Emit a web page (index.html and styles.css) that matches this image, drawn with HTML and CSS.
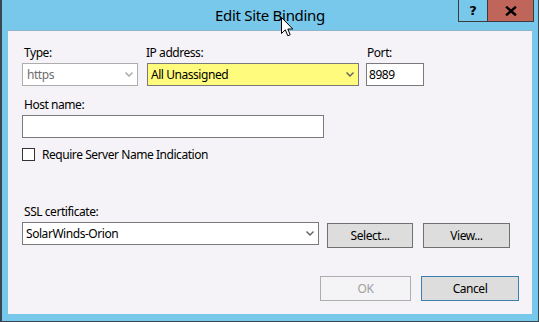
FILE: index.html
```html
<!DOCTYPE html>
<html>
<head>
<meta charset="utf-8">
<link rel="stylesheet" href="styles.css">
</head>
<body>
<div class="window">
  <div class="titlebar">
    <div class="tb-side"></div>
    <div class="title">Edit Site Binding</div>
    <div class="tb-side tb-buttons">
      <div class="cap-btn help">?</div>
      <div class="cap-btn close">
        <svg width="12" height="10" viewBox="0 0 12 10"><path d="M2 1.5 L10 8.5 M10 1.5 L2 8.5" stroke="#000" stroke-width="2.4" stroke-linecap="square"/></svg>
      </div>
    </div>
  </div>
  <div class="client">
    <div class="row row1">
      <div class="field f-type">
        <div class="label lbl-type">Type:</div>
        <div class="combo disabled">
          <span class="val">https</span>
          <svg class="chev" width="8" height="5" viewBox="0 0 8 5"><path d="M0.5 0.5 L4 4 L7.5 0.5" fill="none" stroke="#a6a6a6" stroke-width="1.4"/></svg>
        </div>
      </div>
      <div class="field f-ip">
        <div class="label lbl-ip">IP address:</div>
        <div class="combo yellow">
          <span class="val">All Unassigned</span>
          <svg class="chev" width="8" height="5" viewBox="0 0 8 5"><path d="M0.5 0.5 L4 4 L7.5 0.5" fill="none" stroke="#606060" stroke-width="1.4"/></svg>
        </div>
      </div>
      <div class="field f-port">
        <div class="label lbl-port">Port:</div>
        <div class="textbox port"><span class="val">8989</span></div>
      </div>
    </div>
    <div class="field f-host">
      <div class="label lbl-type">Host name:</div>
      <div class="textbox host"></div>
    </div>
    <div class="check-row">
      <div class="checkbox"></div>
      <span class="check-label">Require Server Name Indication</span>
    </div>
    <div class="field f-ssl">
      <div class="label lbl-type">SSL certificate:</div>
      <div class="ssl-row">
        <div class="combo ssl">
          <span class="val">SolarWinds-Orion</span>
          <svg class="chev" width="8" height="5" viewBox="0 0 8 5"><path d="M0.5 0.5 L4 4 L7.5 0.5" fill="none" stroke="#606060" stroke-width="1.4"/></svg>
        </div>
        <div class="btn btn-select">Select...</div>
        <div class="btn btn-view">View...</div>
      </div>
    </div>
    <div class="footer">
      <div class="btn btn-ok">OK</div>
      <div class="btn btn-cancel">Cancel</div>
    </div>
  </div>
  <svg class="cursor" width="13" height="21" viewBox="0 0 13 21"><path d="M0.5 0.5 L0.5 16.5 L4.3 12.8 L6.8 18.8 L9.2 17.8 L6.8 12 L11.8 12 Z" fill="#fff" stroke="#000" stroke-width="1" stroke-linejoin="miter"/></svg>
</div>
</body>
</html>
```
FILE: styles.css
```css
* { box-sizing: border-box; }
html, body { margin: 0; padding: 0; background: #ffffff; }
body {
  font-family: "Noto Sans", "Open Sans", sans-serif;
  font-size: 12px;
  letter-spacing: -0.45px;
  color: #000;
}
.window {
  position: relative;
  width: 539px;
  height: 322px;
  background: #78c8ec;
  border-left: 2px solid #3a4650;
  border-right: 1px solid #3a4650;
  border-bottom: 1px solid #3a4650;
  display: flex;
  flex-direction: column;
  overflow: hidden;
}
.titlebar {
  height: 30px;
  display: grid;
  grid-template-columns: 1fr auto 1fr;
}
.title {
  font-size: 15px;
  line-height: 30px;
  letter-spacing: -0.3px;
  color: #000;
  white-space: nowrap;
}
.tb-buttons {
  display: flex;
  justify-content: flex-end;
  align-items: flex-start;
  padding-right: 4px;
}
.cap-btn {
  height: 22px;
  border: 1px solid #3b3b3b;
  border-top: none;
  display: flex;
  align-items: center;
  justify-content: center;
  letter-spacing: 0;
}
.help {
  width: 29px;
  background: #78c8ec;
  font-weight: bold;
  font-size: 13px;
  font-family: "DejaVu Sans", sans-serif;
  border-right: none;
}
.close {
  width: 47px;
  background: #bf655a;
}
.client {
  margin: 0 6px 7px 6px;
  flex: 1;
  background: #f5f3f7;
  border-top: 1px solid #8fb4cc;
  display: flex;
  flex-direction: column;
  padding: 14px 0 0 14px;
}
.row { display: flex; }
.field { display: flex; flex-direction: column; }
.label {
  height: 15px;
  line-height: 15px;
  margin-bottom: 3px;
  white-space: nowrap;
}
.lbl-type { padding-left: 2px; }
.lbl-ip { margin-left: -1px; }
.lbl-port { padding-left: 1px; }
.combo, .textbox {
  height: 23px;
  border: 1px solid #7a7a7a;
  background: #fff;
  display: flex;
  align-items: center;
  line-height: 21px;
}
.combo .val, .textbox .val { flex: 1; padding-left: 4px; white-space: nowrap; }
.chev { margin-right: 4px; flex: none; }
.f-type { width: 116px; }
.combo.disabled { border-color: #adadad; color: #6d6d6d; }
.f-ip { width: 212px; margin-left: 9px; }
.combo.yellow { background: #fffb7c; border-color: #7a7a7a; }
.combo.yellow .val { padding-left: 3px; }
.f-port { width: 58px; margin-left: 7px; }
.textbox.port .val { padding-left: 2px; }
.f-host { margin-top: 11px; }
.textbox.host { width: 302px; }
.check-row {
  display: flex;
  align-items: center;
  margin-top: 10px;
  height: 13px;
}
.checkbox {
  width: 13px;
  height: 13px;
  border: 1px solid #333;
  background: #fff;
}
.check-label { margin-left: 7px; line-height: 15px; white-space: nowrap; }
.f-ssl { margin-top: 43px; }
.ssl-row { display: flex; align-items: flex-start; }
.combo.ssl { width: 297px; }
.combo.ssl .val { padding-left: 3px; }
.btn {
  height: 25px;
  background: #dddddd;
  border: 1px solid #707070;
  display: flex;
  align-items: center;
  justify-content: center;
  line-height: 23px;
}
.btn-select { width: 86px; margin-left: 8px; margin-top: 1px; }
.btn-view { width: 87px; margin-left: 10px; margin-top: 1px; }
.footer {
  display: flex;
  margin-top: 28px;
  padding-left: 298px;
}
.btn-ok {
  width: 91px;
  background: #f4f3f6;
  border-color: #adadad;
  color: #a0a0a0;
}
.btn-cancel {
  width: 98px;
  margin-left: 10px;
  border-color: #3c7fb1;
}
.cursor {
  position: absolute;
  left: 279px;
  top: 17px;
}
```
